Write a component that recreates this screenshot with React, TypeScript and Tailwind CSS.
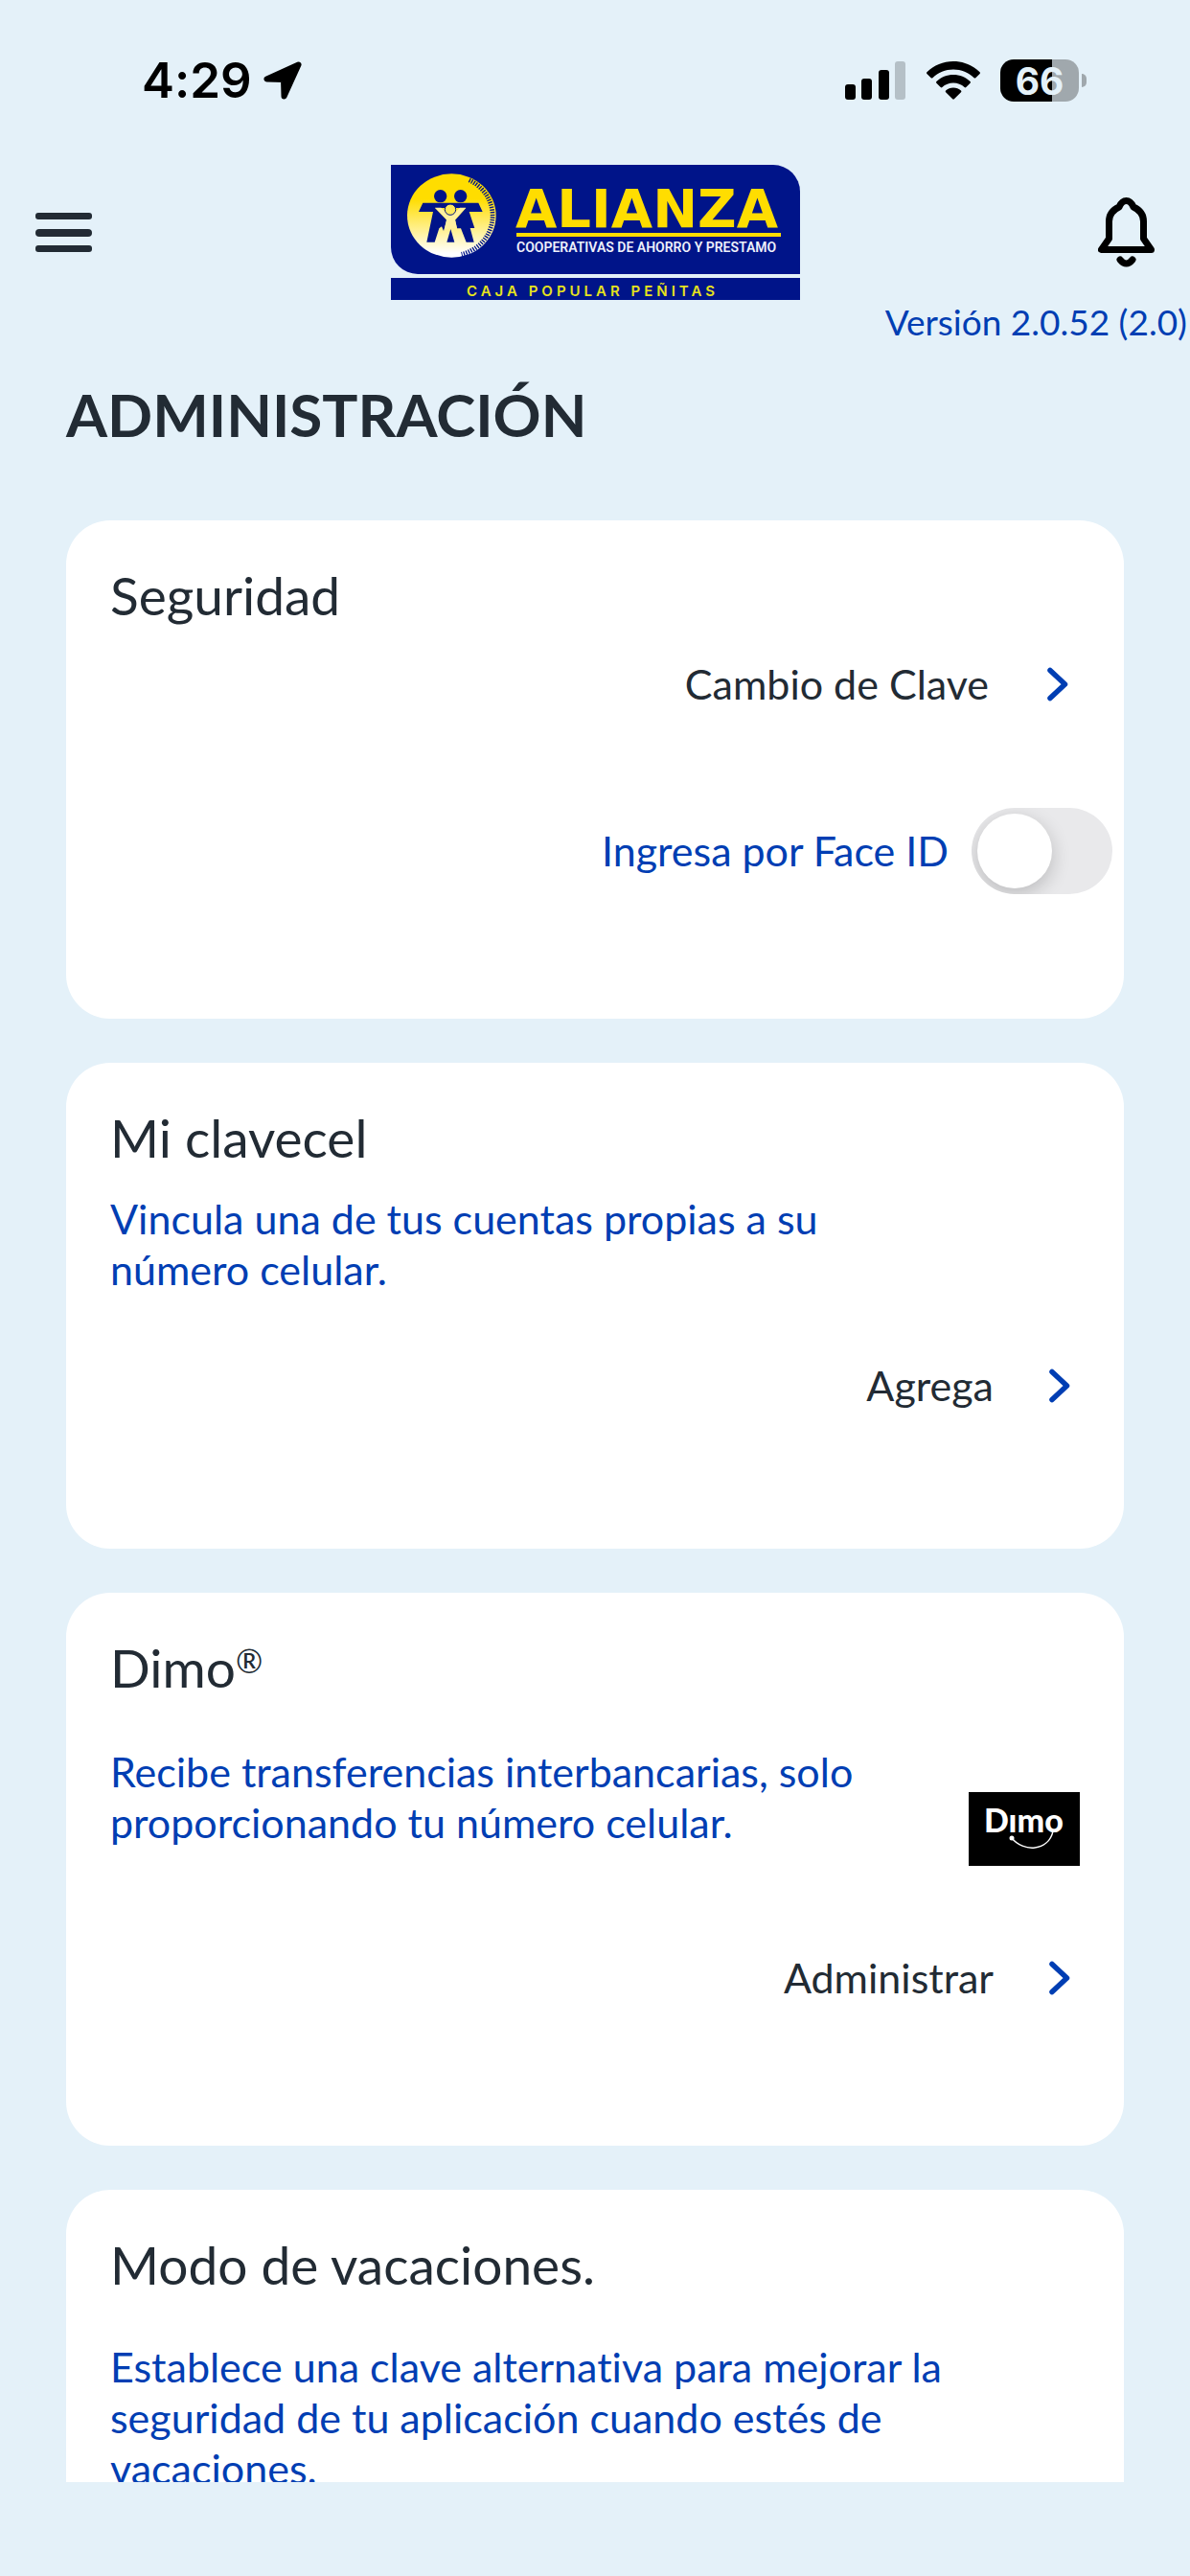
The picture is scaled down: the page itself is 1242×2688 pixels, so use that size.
import React, { useState } from "react";
import clsx from "clsx";

function StatusBar() {
  return (
    <div className="flex h-[168px] items-center justify-between pl-[148px] pr-[108px] text-black">
      <div className="flex items-center gap-3">
        <span className="font-['Inter',sans-serif] text-[51px] font-semibold leading-[60px]">
          4:29
        </span>
        <svg className="h-10 w-10" viewBox="0 0 40 40" aria-hidden="true">
          <path
            d="M36.500 3.500 L3.500 18.500 L21 19 L21.500 36.500 Z"
            fill="currentColor"
            stroke="currentColor"
            strokeWidth="6"
            strokeLinejoin="round"
          />
        </svg>
      </div>

      <div className="flex items-center gap-[21px]">
        <svg className="h-10 w-16" viewBox="0 0 64 40" aria-hidden="true">
          <rect x="0" y="24" width="11" height="16" rx="3" />
          <rect x="17" y="18" width="11" height="22" rx="3" />
          <rect x="35" y="9" width="11" height="31" rx="3" />
          <rect x="52" y="0" width="11" height="40" rx="3" fill="#b5c0c7" />
        </svg>
        <svg className="h-10 w-14" viewBox="0 0 56 40" aria-hidden="true">
          <path d="M28 0C17.500 0 7.600 4.100 .4 11.200c-.5.500-.5 1.200 0 1.700l4.300 4.300c.5.500 1.200.5 1.700 0C12.100 11.700 19.800 8.600 28 8.600s15.900 3.100 21.600 8.600c.5.500 1.200.5 1.700 0l4.300-4.300c.5-.5.500-1.200 0-1.700C48.400 4.100 38.500 0 28 0Z" />
          <path d="M28 14c-6.700 0-12.900 2.600-17.600 7-.5.500-.5 1.200 0 1.700l4.300 4.300c.5.500 1.200.5 1.700 0 3.100-2.900 7.200-4.500 11.600-4.500s8.500 1.600 11.600 4.500c.5.500 1.200.5 1.700 0l4.300-4.300c.5-.5.500-1.200 0-1.700-4.700-4.400-10.900-7-17.600-7Z" />
          <path d="M28 27.500c-3 0-5.800 1.100-7.900 3-.5.500-.5 1.200 0 1.700l7.100 7.100c.5.500 1.200.5 1.700 0l7.100-7.100c.5-.5.500-1.200 0-1.700-2.200-1.900-5-3-8-3Z" />
        </svg>
        <div className="flex items-center gap-[3px]">
          <div className="flex h-11 w-[82px] items-center justify-center rounded-[14px] bg-linear-to-r from-black from-66% to-[#a0a8ad] to-66% font-['Inter',sans-serif] text-[39px] font-bold leading-none text-[#e4f1f9]">
            66
          </div>
          <div className="h-[14px] w-[5px] rounded-r-full bg-[#a0a8ad]" />
        </div>
      </div>
    </div>
  );
}

function AlianzaLogo() {
  return (
    <svg
      className="h-[142px] w-[427px]"
      viewBox="0 0 427 142"
      role="img"
      aria-label="Alianza"
    >
      <defs>
        <linearGradient id="coin" x1="0" y1="0" x2="0" y2="1">
          <stop offset="0.3" stopColor="#ffdd00" />
          <stop offset="0.95" stopColor="#ffffff" />
        </linearGradient>
      </defs>
      <path d="M0 0H399A28 28 0 0 1 427 28V114H28A28 28 0 0 1 0 86Z" fill="#001489" />
      <path d="M0 118H427V141H0Z" fill="#001489" />

      {/* Moneda con la familia */}
      <g transform="scale(0.33333) translate(-55 -37)">
        <ellipse cx="245" cy="196" rx="139" ry="131" fill="url(#coin)" />
        <path
          d="M300 85A129 124 0 0 1 276 317"
          fill="none"
          stroke="#001489"
          strokeWidth="14"
          strokeDasharray="4 4"
        />
        <g fill="#001489">
          <circle cx="210" cy="135" r="20" />
          <circle cx="273" cy="135" r="20" />
          <path d="M155 156H329L342 184H300L317 235H303L315 279H291L274 236H262L256 210L290 172H193L230 210L220 244L214 230L206 236L192 279H167L187 184H142Z" />
          <path d="M242 238L254 279H230Z" />
        </g>
        <path
          d="M193 171H212L228 187Q241 198 255 187L271 171H290L256 208L262 236H242L222 240L229 208Z"
          fill="#fff0a0"
        />
        <circle cx="241" cy="177" r="17" fill="#ffe95c" stroke="#001489" strokeWidth="3" />
      </g>

      <text
        x="130"
        y="65"
        fontFamily="'DejaVu Sans', sans-serif"
        fontWeight="700"
        fontSize="56"
        fill="#ffdd00"
      >
        ALIANZA
      </text>
      <path d="M131 71H407V75H131Z" fill="#ffdd00" />
      <text
        x="131"
        y="91"
        fontFamily="Roboto, sans-serif"
        fontWeight="600"
        fontSize="14"
        fill="#eef0fa"
      >
        COOPERATIVAS DE AHORRO Y PRESTAMO
      </text>
      <text
        x="79"
        y="137"
        fontFamily="Inter, sans-serif"
        fontWeight="600"
        fontSize="15"
        letterSpacing="4"
        fill="#e6e31c"
      >
        CAJA POPULAR PEÑITAS
      </text>
    </svg>
  );
}

function DimoLogo() {
  return (
    <svg
      className="h-[77px] w-[116px] shrink-0"
      viewBox="0 0 116 77"
      role="img"
      aria-label="Dimo"
    >
      <rect width="116" height="77" />
      <text
        x="16"
        y="42"
        fontFamily="Lato, sans-serif"
        fontWeight="900"
        fontSize="34"
        fill="#fff"
      >
        Dımo
      </text>
      <circle cx="45" cy="48" r="2.500" fill="#fff" />
      <path d="M45 48C57 63 83 62 88 41" fill="none" stroke="#fff" strokeWidth="1.400" />
    </svg>
  );
}

function Card({
  title,
  className,
  children,
}: {
  title: React.ReactNode;
  className?: string;
  children: React.ReactNode;
}) {
  return (
    <section className={clsx("rounded-[46px] bg-white px-[46px] pt-[46px]", className)}>
      <h2 className="text-[55px] leading-[64px]">{title}</h2>
      {children}
    </section>
  );
}

function ActionLink({ label, className }: { label: string; className?: string }) {
  return (
    <a
      href="#"
      className={clsx(
        "ml-auto flex w-fit items-center text-[43px] leading-[52px]",
        className
      )}
    >
      {label}
      <svg className="h-9 w-[22px] text-[#003eb3]" viewBox="0 0 22 36" aria-hidden="true">
        <path
          d="M3 3.500L18.500 18L3 32.500"
          fill="none"
          stroke="currentColor"
          strokeWidth="5.500"
          strokeLinecap="round"
          strokeLinejoin="round"
        />
      </svg>
    </a>
  );
}

export default function App() {
  const [faceId, setFaceId] = useState(false);

  return (
    <div className="flex h-screen flex-col bg-[#e4f1f9] font-['Lato',sans-serif] text-[#222b34] [font-variant-ligatures:none]">
      <StatusBar />

      <header className="flex items-center justify-between px-[37px] pt-1">
        <button type="button" aria-label="Menú">
          <svg className="h-[42px] w-[59px]" viewBox="0 0 59 42" fill="currentColor">
            <rect width="59" height="7" y="0" rx="3" />
            <rect width="59" height="8" y="17" rx="4" />
            <rect width="59" height="7" y="34" rx="3" />
          </svg>
        </button>
        <AlianzaLogo />
        <button type="button" aria-label="Notificaciones" className="text-black">
          <svg
            className="h-[74px] w-[59px]"
            viewBox="0 0 59 74"
            fill="none"
            stroke="currentColor"
            strokeWidth="7"
            strokeLinecap="round"
            strokeLinejoin="round"
          >
            <path d="M3.500 54.500H55.500L47.500 43V25C47.500 18 43.500 13 37 10C35 5.500 33 3.500 29.500 3.500S24 5.500 22 10C15.500 13 11.500 18 11.500 25V43Z" />
            <path d="M23 65Q29.500 73 36 65" />
          </svg>
        </button>
      </header>

      <p className="pr-[3px] text-right text-[37px] leading-[44px] text-[#003eb3]">
        Versión 2.0.52 (2.0)
      </p>

      <main className="mt-9 mb-[98px] min-h-0 flex-1 overflow-y-auto px-[69px] [scrollbar-width:none]">
        <h1 className="text-[62px] font-bold leading-[76px]">ADMINISTRACIÓN</h1>

        <div className="mt-[73px] flex flex-col gap-[46px]">
          <Card title="Seguridad" className="pb-[130px]">
            <ActionLink label="Cambio de Clave" className="mt-[35px] mr-3 gap-[61px]" />
            {/* El interruptor queda casi al borde de la tarjeta */}
            <label className="-mr-[34px] mt-[103px] flex items-center justify-end gap-6 text-[43px] leading-[52px] text-[#003eb3]">
              Ingresa por Face ID
              <input
                type="checkbox"
                role="switch"
                checked={faceId}
                onChange={(e) => setFaceId(e.target.checked)}
                className="flex h-[90px] w-[147px] appearance-none overflow-hidden rounded-full bg-[#e9e9eb] p-[6px] before:block before:size-[78px] before:rounded-full before:bg-white before:shadow-[0_6px_20px_rgba(0,0,0,0.2)] checked:justify-end checked:bg-[#34c759]"
              />
            </label>
          </Card>

          <Card title="Mi clavecel" className="pb-36">
            <p className="mt-[26px] max-w-[800px] text-[43px] leading-[53px] text-[#003eb3]">
              Vincula una de tus cuentas propias a su número celular.
            </p>
            <ActionLink label="Agrega" className="mt-[69px] mr-[10px] gap-[58px]" />
          </Card>

          <Card
            title={
              <>
                Dimo
                <span className="inline-block align-[15px] text-[34px] leading-none">®</span>
              </>
            }
            className="pb-[149px]"
          >
            <div className="mt-[50px] flex items-start justify-between">
              <p className="max-w-[820px] text-[43px] leading-[53px] text-[#003eb3]">
                Recibe transferencias interbancarias, solo proporcionando tu número celular.
              </p>
              <div className="pt-12">
                <DimoLogo />
              </div>
            </div>
            <ActionLink label="Administrar" className="mt-[91px] mr-[10px] gap-[58px]" />
          </Card>

          <Card title="Modo de vacaciones." className="pb-36">
            <p className="mt-12 max-w-[890px] text-[43px] leading-[53px] text-[#003eb3]">
              Establece una clave alternativa para mejorar la seguridad de tu aplicación
              cuando estés de vacaciones.
            </p>
          </Card>
        </div>
      </main>
    </div>
  );
}
